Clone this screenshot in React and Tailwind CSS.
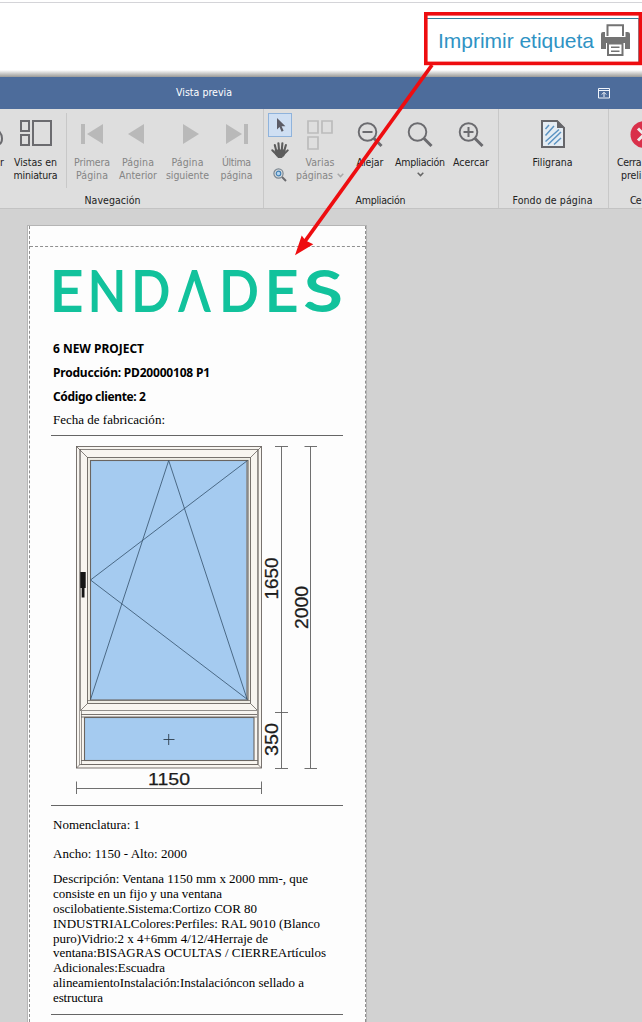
import React, { useLayoutEffect, useRef } from "react";

const UI = "font-['DejaVu_Sans_Condensed','DejaVu_Sans',sans-serif] [font-stretch:condensed]";
const SERIF = "font-['Liberation_Serif',serif]";

// Single line of text whose letter spacing is adjusted to fill a given width.
function Fit({ w, children, className = "" }) {
  const ref = useRef(null);
  useLayoutEffect(() => {
    const el = ref.current;
    el.style.letterSpacing = "0px";
    const n = Math.max(1, String(children).length - 1);
    const natural = el.getBoundingClientRect().width;
    const s = (w - natural) / n;
    el.style.letterSpacing = s + "px";
    el.style.marginRight = -s + "px";
  }, [w, children]);
  return (
    <span ref={ref} className={"inline-block whitespace-nowrap " + className}>
      {children}
    </span>
  );
}

function Tool({ className = "", icon, lines, off, chevron }) {
  return (
    <div className={"flex shrink-0 flex-col items-center pt-[11px] " + (off ? "text-[#858585] " : "text-[#222222] ") + className}>
      <div className="flex h-[36px] items-start justify-center">{icon}</div>
      {lines.map(([t, w]) => (
        <div key={t} className="flex h-[13px] items-center justify-center whitespace-nowrap text-[10.5px] leading-[13px]">
          <Fit w={w}>{t}</Fit>
          {chevron === "inline" && t === "páginas" && (
            <svg width="7" height="5" className="ml-[4px]" fill="none" stroke="#aaaaaa" strokeWidth="1.5">
              <path d="M.7 .8 3.5 3.6 6.3 .8" />
            </svg>
          )}
        </div>
      ))}
      {chevron === "below" && (
        <svg width="7" height="5" className="mt-[3px]" fill="none" stroke="#666666" strokeWidth="1.5">
          <path d="M.7 .8 3.5 3.6 6.3 .8" />
        </svg>
      )}
    </div>
  );
}

function Caption({ w, className = "", children }) {
  return (
    <div className={"flex h-[18px] items-center justify-center pt-[2px] text-[10.5px] leading-[16px] text-[#222222] " + className}>
      <Fit w={w}>{children}</Fit>
    </div>
  );
}

function Lens({ sign }) {
  return (
    <svg width="26" height="27" fill="none" stroke="#6b6b6f">
      <circle cx="10.5" cy="11" r="8.8" strokeWidth="1.9" />
      <path d="M17 17.5 24.5 25" strokeWidth="3" />
      {sign && <path d="M5.5 11h10" strokeWidth="2" />}
      {sign === "+" && <path d="M10.5 6v10" strokeWidth="2" />}
    </svg>
  );
}

function Ribbon() {
  return (
    <div className={"flex h-[100px] w-full overflow-hidden border-b border-[#c3c3c3] bg-[#dedede] " + UI}>
      <div className="flex w-[264px] shrink-0 flex-col border-r border-[#c8c8c8]">
        <div className="flex h-[82px]">
          <div className="flex w-[8px] flex-col items-start pt-[11px] text-[10.5px] leading-[13px] text-[#222222]">
            <svg width="5" height="36" fill="none" stroke="#6b6b6f" strokeWidth="2">
              <path d="M-2 10C0 12 2 14 2 18.500s-2 6-5 6" />
            </svg>
            <span>r</span>
          </div>
          <Tool
            className="w-[55px]"
            icon={
              <svg width="32" height="26" fill="none" stroke="#6b6b6f" strokeWidth="2">
                <path d="M1 1h8v10H1zM1 15h8v10H1zM13 1h18v24H13z" />
              </svg>
            }
            lines={[["Vistas en", 43], ["miniatura", 44]]}
          />
          <div className="ml-[3px] mt-[4px] h-[75px] w-px bg-[#c8c8c8]" />
          <Tool
            off
            className="ml-[2px] w-[46px]"
            icon={
              <svg width="22" height="26" fill="#b9b9b9">
                <path d="M0 4h4v20H0zM22 4v20L6 14z" />
              </svg>
            }
            lines={[["Primera", 36], ["Página", 32]]}
          />
          <Tool
            off
            className="w-[46px]"
            icon={
              <svg width="20" height="26" fill="#b9b9b9" className="mr-[3px]">
                <path d="M17 4v20L1 14z" />
              </svg>
            }
            lines={[["Página", 32], ["Anterior", 38]]}
          />
          <Tool
            off
            className="w-[53px]"
            icon={
              <svg width="16" height="26" fill="#b9b9b9" className="ml-[7px]">
                <path d="M0 4v20l16-10z" />
              </svg>
            }
            lines={[["Página", 32], ["siguiente", 43]]}
          />
          <Tool
            off
            className="w-[45px]"
            icon={
              <svg width="22" height="26" fill="#b9b9b9">
                <path d="M0 4v20l16-10zM18 4h4v20h-4z" />
              </svg>
            }
            lines={[["Última", 29], ["página", 32]]}
          />
        </div>
        <Caption w={56} className="w-[225px]">Navegación</Caption>
      </div>

      <div className="flex w-[235px] shrink-0 flex-col border-r border-[#c8c8c8]">
        <div className="flex h-[82px]">
          <div className="ml-[4px] flex w-[24px] flex-col items-center pt-[4px]">
            <div className="flex h-[24px] w-[24px] items-center justify-center border border-[#8fb3dc] bg-[#cfdff3]">
              <svg width="10" height="14" fill="#5c5c66" className="ml-[2px]">
                <path d="M1 0v11.5l2.6-2.4 2 4.6 2-.9-2-4.5H9.4z" />
              </svg>
            </div>
            <svg width="18" height="16" className="mt-[5px]" fill="#5c5c5c" stroke="#5c5c5c" strokeLinecap="round">
              <path d="M4.5 8h9.5l-1 5.500-2 2H7l-2-2.500z" />
              <path d="M5.3 9 3.8 3M8 8 7.4 1.2M10.8 8l.6-6.8M13.2 9l1.7-6" strokeWidth="2.1" fill="none" />
              <path d="M5.5 12.5 1.3 8.3M13 12l3.7-3.6" strokeWidth="2" fill="none" />
            </svg>
            <svg width="14" height="14" className="mt-[10px]" fill="none">
              <circle cx="5.5" cy="5.5" r="4.6" stroke="#7c8791" strokeWidth="1.2" />
              <circle cx="5.5" cy="5.5" r="2.3" fill="#b7d5ee" stroke="#3f7fb5" strokeWidth="1.2" />
              <path d="m9 9 4 4" stroke="#6b6b6f" strokeWidth="2" />
            </svg>
          </div>
          <Tool
            off
            chevron="inline"
            className="w-[56px]"
            icon={
              <svg width="26" height="30" fill="none" stroke="#bcbcbc" strokeWidth="1.7" className="mr-[1px]">
                <path d="M1 1h10v12H1zM15 1h10v12H15zM1 17h10v12H1z" />
              </svg>
            }
            lines={[["Varias", 29], ["páginas", 37]]}
          />
          <Tool className="w-[44px]" icon={<span className="mt-[1px]"><Lens sign="-" /></span>} lines={[["Alejar", 27]]} />
          <Tool chevron="below" className="w-[56px]" icon={<span className="mt-[1px]"><Lens /></span>} lines={[["Ampliación", 50]]} />
          <Tool className="w-[46px]" icon={<span className="mt-[1px]"><Lens sign="+" /></span>} lines={[["Acercar", 36]]} />
        </div>
        <Caption w={50} className="w-[233px]">Ampliación</Caption>
      </div>

      <div className="flex w-[110px] shrink-0 flex-col border-r border-[#c8c8c8]">
        <div className="flex h-[82px] justify-center">
          <Tool
            className="w-[82px] pr-[2px]"
            icon={
              <svg width="24" height="29" fill="none">
                <path d="M1 1h15l7 7v19H1z" fill="#e4ecf3" stroke="#66666a" strokeWidth="2" />
                <path d="M16 0l8 8h-8z" fill="#66666a" />
                <path d="M4.500 9 8 5M4.500 15.500 13 6M4.500 21.500 18 9.500M7 24.500 20 12M13 24.500l7-6.500" stroke="#5b93c2" strokeWidth="1.5" />
              </svg>
            }
            lines={[["Filigrana", 40]]}
          />
        </div>
        <Caption w={80} className="w-[107px]">Fondo de página</Caption>
      </div>

      <div className="flex w-[33px] shrink-0 flex-col overflow-hidden">
        <div className="flex h-[82px] flex-col pl-[8px] pt-[11px] text-[10.5px] leading-[13px] text-[#222222]">
          <svg width="28" height="36" className="ml-[13px] shrink-0">
            <circle cx="14" cy="14.500" r="13.500" fill="#d9304a" />
            <path d="m8 8.500 12 12m0-12-12 12" stroke="#ececec" strokeWidth="3" />
          </svg>
          <span className="h-[13px] whitespace-nowrap"><Fit w={24.5}>Cerra</Fit></span>
          <span className="h-[13px] whitespace-nowrap pl-[4px]"><Fit w={20.5}>preli</Fit></span>
        </div>
        <div className="flex h-[18px] items-center pl-[21px] pt-[2px] text-[10.5px] leading-[16px] text-[#222222]"><Fit w={11.5}>Ce</Fit></div>
      </div>
    </div>
  );
}

const logo = [
  ["E", 50, 33],
  ["N", 88, 38],
  ["D", 131.5, 38.5],
  ["Λ", 179, 31],
  ["D", 219.5, 39],
  ["E", 265, 33],
  ["S", 304, 38.5],
];

function WindowDrawing() {
  return (
    <svg width="291" height="369" viewBox="51 436 291 369" className="block" fill="none">
      <g stroke="#6a6561" strokeWidth="0.9">
        <rect x="76.500" y="446.500" width="185" height="321.500" fill="#f8f5f0" />
        <rect x="79.500" y="449.500" width="179" height="315" strokeWidth=".6" />
        <rect x="80.500" y="449.500" width="177" height="261" fill="#f8f5f0" strokeWidth=".7" />
        <path d="M76.500 446.500 87.500 457.500M261.500 446.500 250.500 457.500M80.500 710.500l7-7M257.500 710.500l-7-7M76.500 768l4-4M261.500 768l-4-4" strokeWidth=".8" />
        <rect x="87.500" y="457.500" width="163" height="246" fill="#efede5" />
        <rect x="90.500" y="460.500" width="157.500" height="239.500" fill="#a5cbf0" strokeWidth="1.100" />
        <path d="M247 461v239" stroke="#8a8784" strokeWidth="1.500" />
        <path d="M87.500 700.500h163" strokeWidth=".7" />
        <path d="M168.700 460.500 90.500 699.500M168.700 460.500l78.500 239M247.500 460.500 90.500 580l157 119.500" stroke="#33506b" strokeWidth=".8" />
        <path d="M81 714.500h176M81 717h176" />
        <path d="M81.500 711v54M257.500 711v54" strokeWidth=".7" />
        <rect x="84.500" y="717.500" width="169.500" height="43" fill="#a5cbf0" strokeWidth="1.100" />
        <path d="M81 760.500h177M81 764.500h177" />
        <path d="M163.500 739.500h11M168.700 734v11" stroke="#2d3d4c" />
      </g>
      <path d="M80.300 572h5.400v16H84.500v9.500H81.700V588h-1.400z" fill="#151515" />
      <g stroke="#606060" strokeWidth=".9">
        <path d="M281.500 446.500v321.500M275 446.500h13M275 712.500h13M275 768.500h13" />
        <path d="M310.500 446.500v321.500M304.500 446.500h12.500M304.500 768.500h12.500" />
        <path d="M76.500 788.500h185M76.500 781.500v12.500M261.500 781.500v12.500" />
      </g>
      <g className="font-['Liberation_Sans',sans-serif] text-[18px]" fill="#1c1c1c" stroke="#1c1c1c" strokeWidth=".25">
        <text x="148" y="785" textLength="42" lengthAdjust="spacingAndGlyphs" className="text-[17px]">1150</text>
        <text transform="translate(278 599.500) rotate(-90)" textLength="42" lengthAdjust="spacingAndGlyphs">1650</text>
        <text transform="translate(307.500 629) rotate(-90)" textLength="43" lengthAdjust="spacingAndGlyphs">2000</text>
        <text transform="translate(278 756) rotate(-90)" textLength="33" lengthAdjust="spacingAndGlyphs">350</text>
      </g>
    </svg>
  );
}

const description = [
  ["Descripción: Ventana 1150 mm x 2000 mm-, que", 255],
  ["consiste en un fijo y una ventana", 169],
  ["oscilobatiente.Sistema:Cortizo COR 80", 204],
  ["INDUSTRIALColores:Perfiles: RAL 9010 (Blanco", 267],
  ["puro)Vidrio:2 x 4+6mm 4/12/4Herraje de", 215],
  ["ventana:BISAGRAS OCULTAS / CIERREArtículos", 273],
  ["Adicionales:Escuadra", 112],
  ["alineamientoInstalación:Instalacióncon sellado a", 251],
  ["estructura", 50],
];

function Label() {
  return (
    <div className="ml-[27px] mt-[16px] h-[797px] w-[340px] border-x border-t border-[#b5b5b5] bg-[#fdfdfd]">
      <div className="ml-px h-full w-[337px] border-x border-dashed border-[#909090]">
        <div className="h-[21px] border-b border-dashed border-[#909090]" />
        <div className="ml-[21px] w-[292px] text-black">
          <svg width="292" height="90" viewBox="51 247 292 90" className="block font-['Lato',sans-serif] text-[56px]" fill="#12c29c" stroke="#12c29c" strokeWidth="1.800">
            {logo.map(([c, x, w], i) => (
              <text key={i} x={x} y="311" textLength={w} lengthAdjust="spacingAndGlyphs">{c}</text>
            ))}
          </svg>
          <div className="pl-[2px] font-['Noto_Sans',sans-serif] text-[12px] font-bold leading-[24px]">
            <div className="h-[24px]"><Fit w={91}>6 NEW PROJECT</Fit></div>
            <div className="h-[24px]"><Fit w={157}>Producción: PD20000108 P1</Fit></div>
            <div className="h-[24px]"><Fit w={93}>Código cliente: 2</Fit></div>
          </div>
          <div className={"h-[27px] border-b border-[#666666] pl-[2px] text-[13px] leading-[22px] " + SERIF}>
            <Fit w={112}>Fecha de fabricación:</Fit>
          </div>
          <WindowDrawing />
          <div className={"border-y border-[#666666] pl-[2px] text-[13px] " + SERIF}>
            <div className="mt-[7px] h-[24px] leading-[24px]"><Fit w={87}>Nomenclatura: 1</Fit></div>
            <div className="mt-[5px] h-[24px] leading-[24px]"><Fit w={134}>Ancho: 1150 - Alto: 2000</Fit></div>
            <div className="mb-[9px] mt-[5px]">
              {description.map(([t, w]) => (
                <div key={t} className="h-[14.900px] leading-[15px]"><Fit w={w}>{t}</Fit></div>
              ))}
            </div>
          </div>
        </div>
      </div>
    </div>
  );
}

export default function App() {
  return (
    <div className="relative flex h-[1022px] w-[642px] flex-col overflow-hidden bg-[#d2d2d2]">
      <header className="flex h-[77px] flex-col bg-white">
        <div className="mt-[2px] h-px bg-[#d4d4d8]" />
        <div className="ml-[427px] mt-[15px] flex h-[44px] w-[212px] items-center border-r border-t border-[#6fa9b8] border-t-[#317f9c] pl-[11px] font-['Liberation_Sans',sans-serif] text-[21px] leading-[24px] text-[#2f93c4]">
          <Fit w={156}>Imprimir etiqueta</Fit>
          <svg width="30" height="32" className="-mt-[2px] ml-[7px] shrink-0">
            <path d="M6.500 12V1.200h15.500V12" fill="none" stroke="#737373" strokeWidth="2" />
            <path d="M0 10q0-2 2-2h2v5h20.500V8h2q2.500 0 2.500 2v15h-5v-6H5v6H0z" fill="#737373" />
            <path d="M7 19.500h14.500V31H7z" fill="#ffffff" stroke="#737373" strokeWidth="2" />
            <path d="M10 23.200h8.500M10 27.200h8.500" stroke="#737373" strokeWidth="1.600" />
          </svg>
        </div>
        <div className="mt-auto h-[7px] bg-gradient-to-b from-white to-[#9a9a98]" />
      </header>
      <div className={"flex h-[32px] items-center bg-[#4d6c9b] pl-[176px] text-[10.5px] text-white " + UI}>
        <Fit w={56}>Vista previa</Fit>
        <svg width="12" height="11" className="ml-[366px]" fill="none" stroke="#f0f4fa">
          <path d="M.5.5h11v9.500H.5zM.5 2.500h11M6 9V4.500M3.800 6.500 6 4.300l2.200 2.200" />
        </svg>
      </div>
      <Ribbon />
      <Label />
      <svg width="642" height="270" className="pointer-events-none absolute left-0 top-0" fill="none" stroke="#ee0d10">
        <rect x="425.800" y="13.800" width="214.600" height="49.600" strokeWidth="3.600" />
        <path d="M432 65 303 244" strokeWidth="3.800" />
        <path d="M295 255.300 301.700 235.500 305.500 240.500 313.300 244.300z" fill="#ee0d10" stroke="none" />
      </svg>
    </div>
  );
}
